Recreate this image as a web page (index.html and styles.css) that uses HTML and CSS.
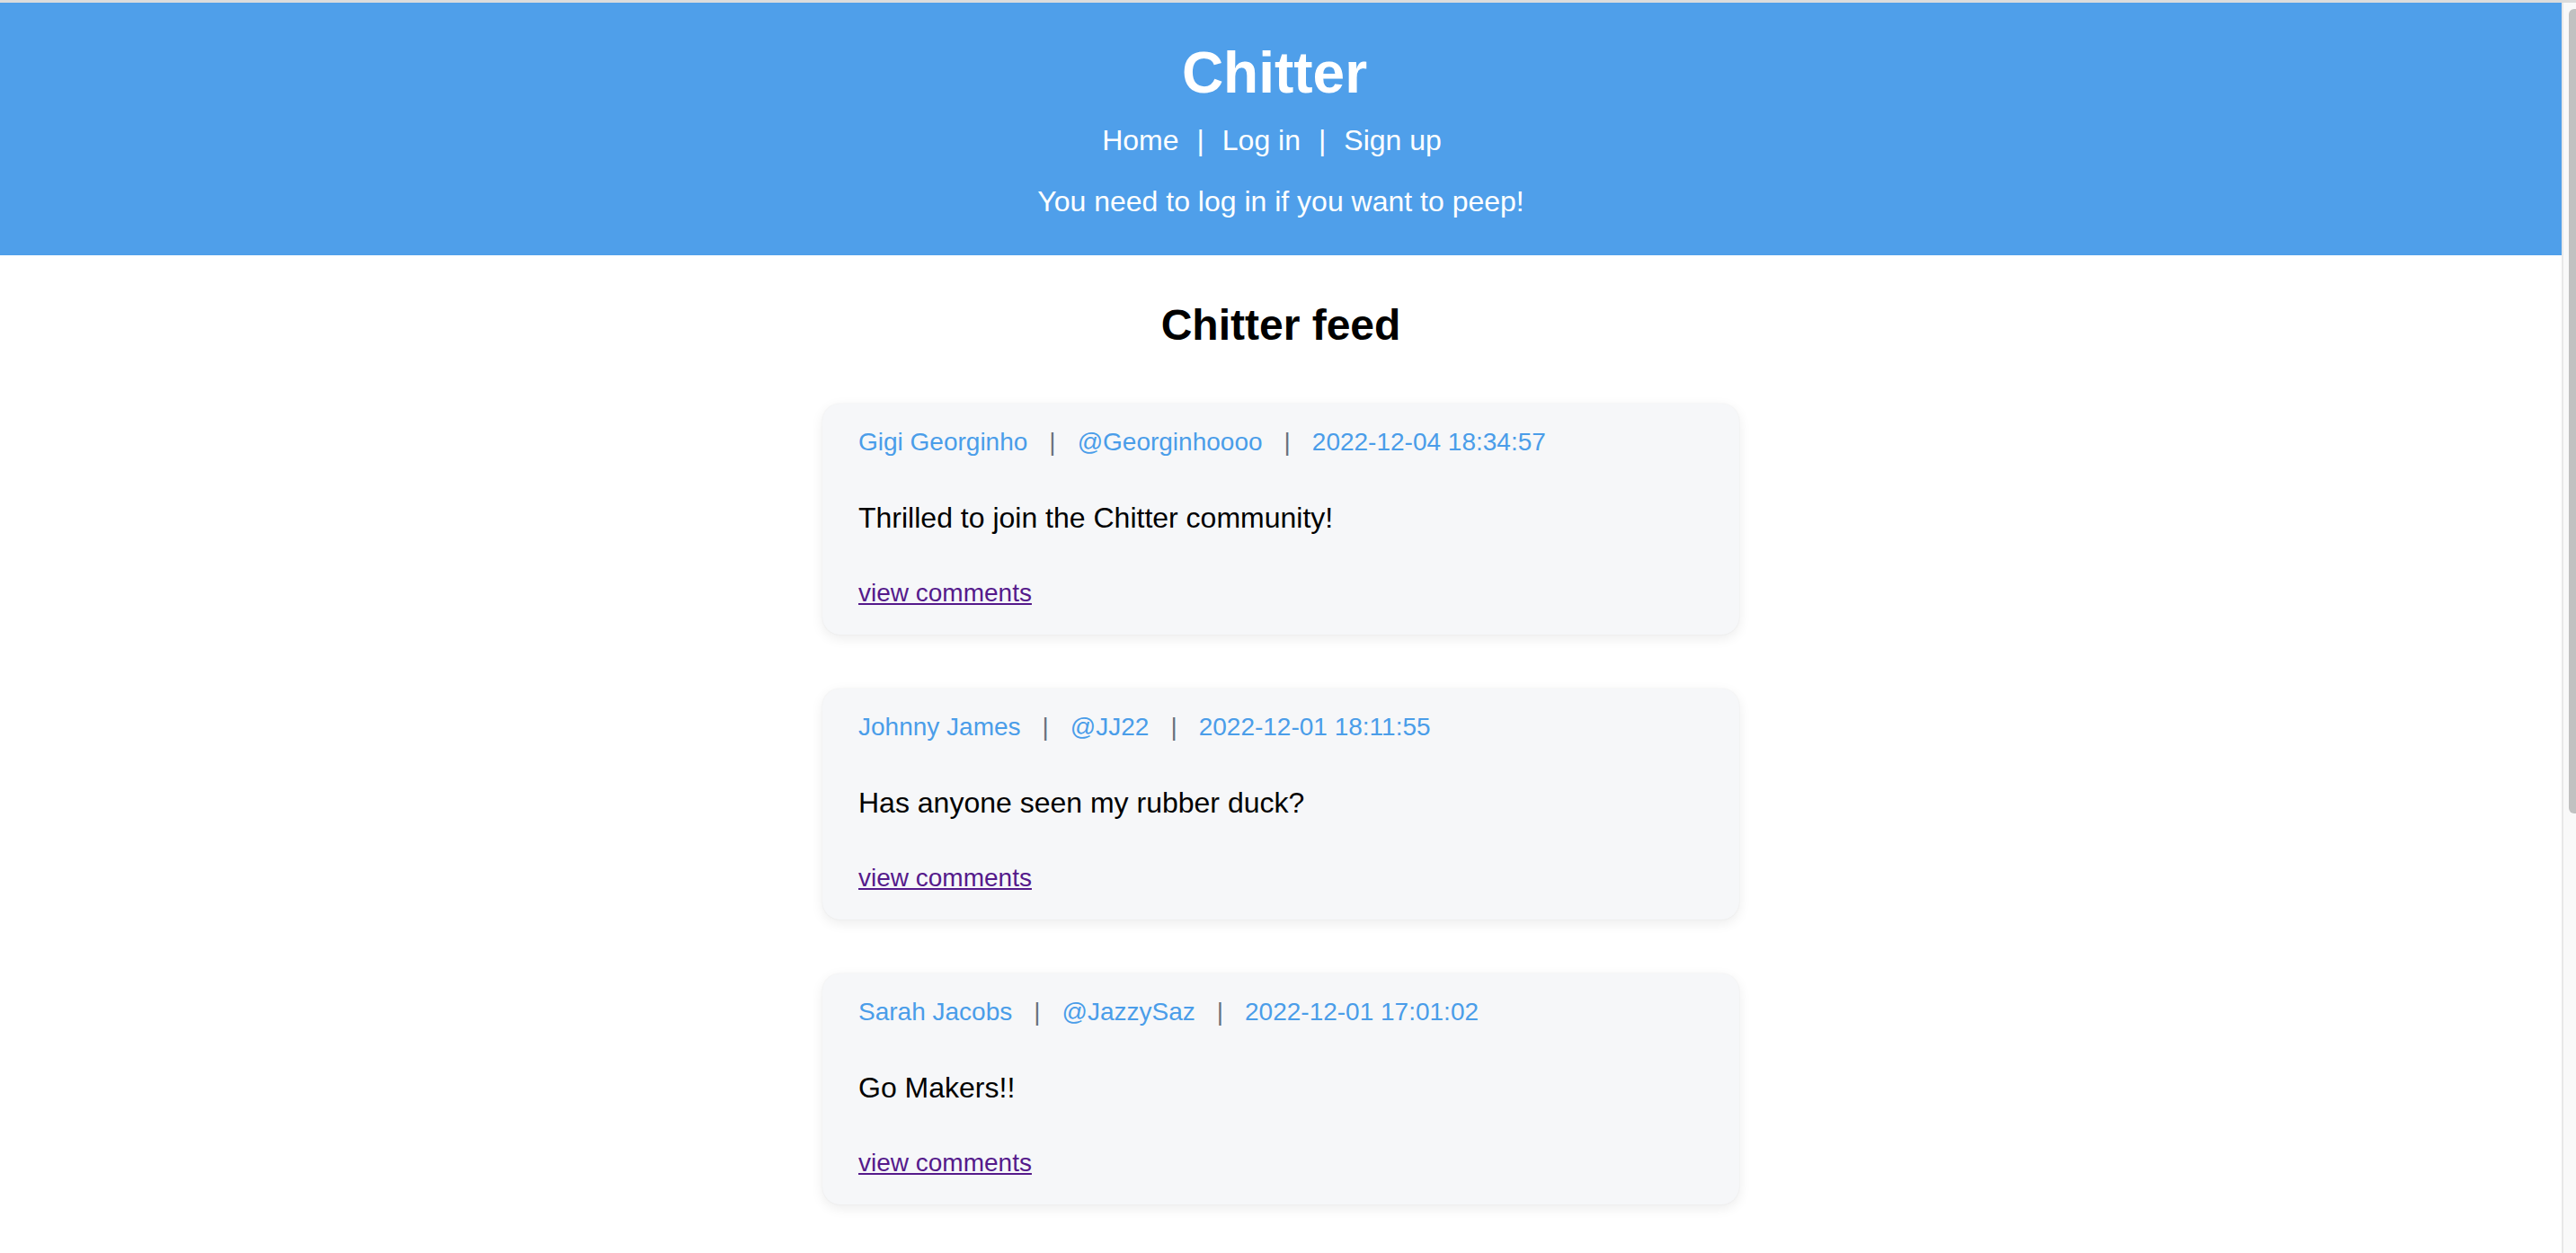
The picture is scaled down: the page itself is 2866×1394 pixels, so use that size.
FILE: index.html
```html
<!DOCTYPE html>
<html lang="en">
<head>
<meta charset="utf-8">
<title>Chitter</title>
<link rel="stylesheet" href="styles.css">
</head>
<body>
<div class="window">
  <div class="page">
    <header class="site-header">
      <h1 class="site-title">Chitter</h1>
      <nav class="site-nav">
        <a href="#" class="nav-link">Home</a><span class="nav-sep">|</span><a href="#" class="nav-link">Log in</a><span class="nav-sep">|</span><a href="#" class="nav-link">Sign up</a>
      </nav>
      <p class="site-message">You need to log in if you want to peep!</p>
    </header>
    <main class="feed">
      <h2 class="feed-title">Chitter feed</h2>
      <div class="peeps">
        <article class="peep">
          <div class="peep-meta"><span class="meta-item">Gigi Georginho</span><span class="meta-sep">|</span><span class="meta-item">@Georginhoooo</span><span class="meta-sep">|</span><span class="meta-item">2022-12-04 18:34:57</span></div>
          <p class="peep-body">Thrilled to join the Chitter community!</p>
          <div class="peep-links"><a href="#" class="comments-link">view comments</a></div>
        </article>
        <article class="peep">
          <div class="peep-meta"><span class="meta-item">Johnny James</span><span class="meta-sep">|</span><span class="meta-item">@JJ22</span><span class="meta-sep">|</span><span class="meta-item">2022-12-01 18:11:55</span></div>
          <p class="peep-body">Has anyone seen my rubber duck?</p>
          <div class="peep-links"><a href="#" class="comments-link">view comments</a></div>
        </article>
        <article class="peep">
          <div class="peep-meta"><span class="meta-item">Sarah Jacobs</span><span class="meta-sep">|</span><span class="meta-item">@JazzySaz</span><span class="meta-sep">|</span><span class="meta-item">2022-12-01 17:01:02</span></div>
          <p class="peep-body">Go Makers!!</p>
          <div class="peep-links"><a href="#" class="comments-link">view comments</a></div>
        </article>
        <article class="peep">
          <div class="peep-meta"><span class="meta-item">Tom Baker</span><span class="meta-sep">|</span><span class="meta-item">@TB42</span><span class="meta-sep">|</span><span class="meta-item">2022-11-30 12:00:00</span></div>
          <p class="peep-body">Hello world!</p>
          <div class="peep-links"><a href="#" class="comments-link">view comments</a></div>
        </article>
      </div>
    </main>
  </div>
  <div class="scrollbar" aria-hidden="true">
    <div class="scroll-thumb"></div>
  </div>
</div>
</body>
</html>
```

FILE: styles.css
```css
html, body {
  margin: 0;
  padding: 0;
}

body {
  font-family: "Liberation Sans", Arial, Helvetica, sans-serif;
  background: #ffffff;
  color: #000000;
  border-top: 3px solid #dcdcdc;
}

.window {
  display: flex;
  align-items: stretch;
}

.page {
  flex: 1;
  min-width: 0;
}

.scrollbar {
  flex: 0 0 14px;
  width: 14px;
  background: #f9f9f9;
  border-left: 2px solid #e8e8e8;
  display: flex;
  justify-content: flex-end;
  padding-top: 7px;
  align-items: flex-start;
}

.scroll-thumb {
  width: 8px;
  height: 895px;
  background: #c1c1c1;
  border-radius: 6px 0 0 6px;
}

.site-header {
  background: #4f9fea;
  color: #ffffff;
  text-align: center;
  padding: 41px 0 41px;
}

.site-title {
  margin: 0;
  padding-right: 14px;
  font-size: 64px;
  line-height: 74px;
  font-weight: 700;
}

.site-nav {
  margin-top: 20px;
  padding-right: 20px;
  font-size: 32px;
  line-height: 37px;
}

.nav-link {
  color: #ffffff;
  text-decoration: none;
}

.nav-sep {
  margin: 0 20px;
}

.site-message {
  margin: 31px 0 0;
  font-size: 32px;
  line-height: 37px;
}

.feed {
  display: flex;
  flex-direction: column;
  align-items: center;
}

.feed-title {
  margin: 50px 0 60px;
  font-size: 48px;
  line-height: 55px;
  font-weight: 700;
}

.peeps {
  display: flex;
  flex-direction: column;
  gap: 60px;
  padding-bottom: 60px;
}

.peep {
  box-sizing: border-box;
  width: 1020px;
  padding: 23px 40px 26px;
  background: #f6f7f9;
  border-radius: 20px;
  box-shadow: 0 4px 14px rgba(0, 0, 0, 0.08), 0 0 2px rgba(0, 0, 0, 0.06);
  display: flex;
  flex-direction: column;
  gap: 44px;
}

.peep-meta {
  font-size: 28px;
  line-height: 40px;
  color: #4a9de9;
}

.meta-sep {
  color: #67717d;
  margin: 0 24px;
}

.peep-body {
  margin: 0;
  font-size: 32px;
  line-height: 40px;
}

.peep-links {
  font-size: 28px;
  line-height: 40px;
}

.comments-link {
  color: #551a8b;
  text-decoration: underline;
}
```
